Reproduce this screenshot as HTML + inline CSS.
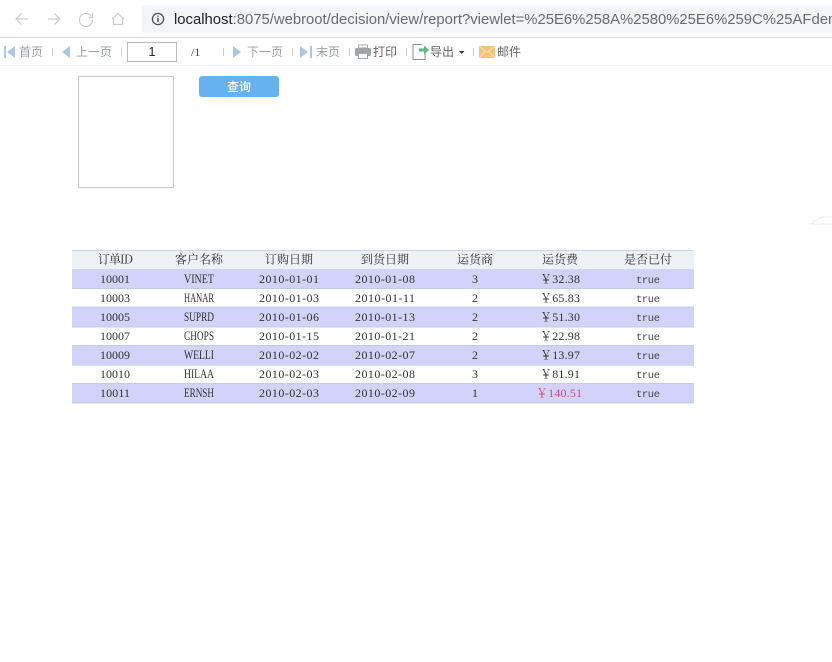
<!DOCTYPE html>
<html><head><meta charset="utf-8"><style>
html,body{margin:0;padding:0;background:#fff;width:832px;height:662px;overflow:hidden}
svg{display:block;position:absolute;left:0;top:0;filter:blur(.3px)}
.cjk{font-family:"Noto Sans CJK SC","Liberation Sans",sans-serif}
.t text{font-family:"Liberation Serif","Noto Serif CJK SC",serif;font-size:12px;fill:#333;text-anchor:middle}
.t .n{font-size:12.5px}
.t .m{font-family:"Liberation Mono",monospace;font-size:10.5px;fill:#444}
.h text{font-family:"Noto Serif CJK SC","Liberation Serif",serif;font-size:12px;fill:#333;text-anchor:middle}
.tb{font-family:"Noto Sans CJK SC","Liberation Sans",sans-serif;font-size:12px;fill:#9a9fa5}
.tb2{font-family:"Noto Sans CJK SC","Liberation Sans",sans-serif;font-size:12px;fill:#666}
</style></head><body>
<svg width="832" height="662" viewBox="0 0 832 662" xmlns="http://www.w3.org/2000/svg">
<rect x="142" y="5" width="690" height="28" fill="#f3f5f8"/>
<rect x="0" y="37" width="832" height="1" fill="#dcdcdc"/>
<rect x="0" y="65" width="832" height="1" fill="#e9eef5"/>
<g fill="none" stroke="#cbcdcf" stroke-width="1.2">
<path d="M28 19H16M21.5 13.5L16 19l5.500 5.500"/>
<path d="M48 19H60M54.500 13.500L60 19l-5.500 5.500"/>
<path d="M91.500 16.500A6.500 6.500 0 1 0 92.500 20M92.500 13.500v4h-4"/>
<path d="M112 19l6-5.500 6 5.500M113.500 18v6.500h9V18"/>
</g>
<circle cx="158" cy="19" r="5.600" fill="none" stroke="#4a4d50" stroke-width="1.300"/>
<rect x="157.300" y="18" width="1.400" height="4" fill="#4a4d50"/><rect x="157.300" y="15.500" width="1.400" height="1.400" fill="#4a4d50"/>
<text x="174" y="24" font-family="Liberation Sans, sans-serif" font-size="14.850" fill="#222">localhost<tspan fill="#686b6f">:8075/webroot/decision/view/report?viewlet=%25E6%258A%2580%25E6%259C%25AFdemo</tspan></text>

<g fill="#a9c6e4">
<rect x="4" y="46" width="2" height="12"/><path d="M15 46v12l-8-6z"/>
<path d="M70 46v12l-8-6z"/>
<path d="M233 46v12l8-6z"/>
<path d="M300 46v12l8-6z"/><rect x="310" y="46" width="2" height="12"/>
</g>
<text class="tb" x="19" y="56">首页</text>
<text class="tb" x="76" y="56">上一页</text>
<text class="tb" x="247" y="56">下一页</text>
<text class="tb" x="316" y="56">末页</text>
<g fill="#ccc">
<rect x="52" y="48" width="1" height="8"/><rect x="121" y="48" width="1" height="8"/><rect x="223" y="48" width="1" height="8"/><rect x="292" y="48" width="1" height="8"/><rect x="349" y="48" width="1" height="8"/><rect x="406" y="48" width="1" height="8"/><rect x="473" y="48" width="1" height="8"/>
</g>
<rect x="127.500" y="42.500" width="49" height="19" fill="#fff" stroke="#bbb"/>
<text x="152" y="56" text-anchor="middle" font-family="Liberation Sans, sans-serif" font-size="12.500" fill="#222">1</text>
<text x="191" y="56" font-family="Liberation Serif, serif" font-size="12" fill="#444">/1</text>

<path d="M358.500 45h9v3h-9z" fill="#fff" stroke="#a9a9a9"/>
<rect x="355" y="48" width="16" height="8" rx="1.500" fill="#a0a4a8"/>
<rect x="358.500" y="53.500" width="9" height="5" fill="#fff" stroke="#a9a9a9"/>
<text class="tb2" x="373" y="56">打印</text>
<path d="M422 44.500h-9v15h12v-6" fill="none" stroke="#8d9399" stroke-width="1"/>
<path d="M419 48.500h5v-3l5 4.500-5 4.500v-3h-5z" fill="#63b482"/>
<text class="tb2" x="430" y="56">导出</text>
<path d="M459 51h5.500l-2.750 3z" fill="#333"/>
<rect x="479" y="46" width="16" height="12" rx="1" fill="#f0c27a"/>
<path d="M479.500 46.500l7.500 6 7.500-6M479.500 57.500l5.500-6M494.500 57.500l-5.500-6" fill="none" stroke="#fae3b8" stroke-width="1"/>
<text class="tb2" x="497" y="56">邮件</text>

<rect x="78.500" y="76.500" width="95" height="111" fill="#fff" stroke="#c6c6c6"/>
<rect x="199" y="76" width="80" height="21" rx="3" fill="#66b1ee"/>
<text x="239" y="91" text-anchor="middle" class="cjk" font-size="12" font-weight="500" fill="#fff">查询</text>

<path d="M811 224q6-6 14-7h7M811 224h21" fill="none" stroke="#ececec" stroke-width="1"/>

<rect x="72" y="250" width="622" height="19" fill="#eef1f6"/>
<rect x="72" y="250" width="622" height="1" fill="#c9d6ee"/>
<g fill="#d2d2fb">
<rect x="72" y="269" width="622" height="19.300"/>
<rect x="72" y="307.300" width="622" height="19.300"/>
<rect x="72" y="345.500" width="622" height="19.300"/>
<rect x="72" y="383.700" width="622" height="19.300"/>
</g>
<g fill="#c3c9e6">
<rect x="72" y="288" width="622" height="1"/><rect x="72" y="326.500" width="622" height="1"/><rect x="72" y="364.700" width="622" height="1"/><rect x="72" y="402.500" width="622" height="1"/>
<rect x="72" y="306.500" width="622" height="1"/><rect x="72" y="345" width="622" height="1"/><rect x="72" y="383" width="622" height="1"/>
</g>
<g class="h">
<text x="115.500" y="263.500" textLength="35">订单ID</text>
<text x="199" y="263.500" textLength="48">客户名称</text>
<text x="289" y="263.500" textLength="48">订购日期</text>
<text x="385" y="263.500" textLength="48">到货日期</text>
<text x="475" y="263.500" textLength="36">运货商</text>
<text x="560" y="263.500" textLength="36">运货费</text>
<text x="648" y="263.500" textLength="48">是否已付</text>
</g>
<g class="t">
<text x="115" y="283" textLength="30">10001</text><text class="n" x="199" y="283" textLength="30" lengthAdjust="spacingAndGlyphs">VINET</text><text x="289" y="283" textLength="60">2010-01-01</text><text x="385" y="283" textLength="60">2010-01-08</text><text x="475" y="283">3</text><text x="560" y="283" textLength="40">&#65509;32.38</text><text class="m" x="648" y="283" textLength="24">true</text>
<text x="115" y="302" textLength="30">10003</text><text class="n" x="199" y="302" textLength="30" lengthAdjust="spacingAndGlyphs">HANAR</text><text x="289" y="302" textLength="60">2010-01-03</text><text x="385" y="302" textLength="60">2010-01-11</text><text x="475" y="302">2</text><text x="560" y="302" textLength="40">&#65509;65.83</text><text class="m" x="648" y="302" textLength="24">true</text>
<text x="115" y="321" textLength="30">10005</text><text class="n" x="199" y="321" textLength="30" lengthAdjust="spacingAndGlyphs">SUPRD</text><text x="289" y="321" textLength="60">2010-01-06</text><text x="385" y="321" textLength="60">2010-01-13</text><text x="475" y="321">2</text><text x="560" y="321" textLength="40">&#65509;51.30</text><text class="m" x="648" y="321" textLength="24">true</text>
<text x="115" y="340" textLength="30">10007</text><text class="n" x="199" y="340" textLength="30" lengthAdjust="spacingAndGlyphs">CHOPS</text><text x="289" y="340" textLength="60">2010-01-15</text><text x="385" y="340" textLength="60">2010-01-21</text><text x="475" y="340">2</text><text x="560" y="340" textLength="40">&#65509;22.98</text><text class="m" x="648" y="340" textLength="24">true</text>
<text x="115" y="359" textLength="30">10009</text><text class="n" x="199" y="359" textLength="30" lengthAdjust="spacingAndGlyphs">WELLI</text><text x="289" y="359" textLength="60">2010-02-02</text><text x="385" y="359" textLength="60">2010-02-07</text><text x="475" y="359">2</text><text x="560" y="359" textLength="40">&#65509;13.97</text><text class="m" x="648" y="359" textLength="24">true</text>
<text x="115" y="378" textLength="30">10010</text><text class="n" x="199" y="378" textLength="30" lengthAdjust="spacingAndGlyphs">HILAA</text><text x="289" y="378" textLength="60">2010-02-03</text><text x="385" y="378" textLength="60">2010-02-08</text><text x="475" y="378">3</text><text x="560" y="378" textLength="40">&#65509;81.91</text><text class="m" x="648" y="378" textLength="24">true</text>
<text x="115" y="397" textLength="30">10011</text><text class="n" x="199" y="397" textLength="30" lengthAdjust="spacingAndGlyphs">ERNSH</text><text x="289" y="397" textLength="60">2010-02-03</text><text x="385" y="397" textLength="60">2010-02-09</text><text x="475" y="397">1</text><text x="559" y="397" textLength="46" style="fill:#d9477f">&#65509;140.51</text><text class="m" x="648" y="397" textLength="24">true</text>
</g>
</svg>
</body></html>
